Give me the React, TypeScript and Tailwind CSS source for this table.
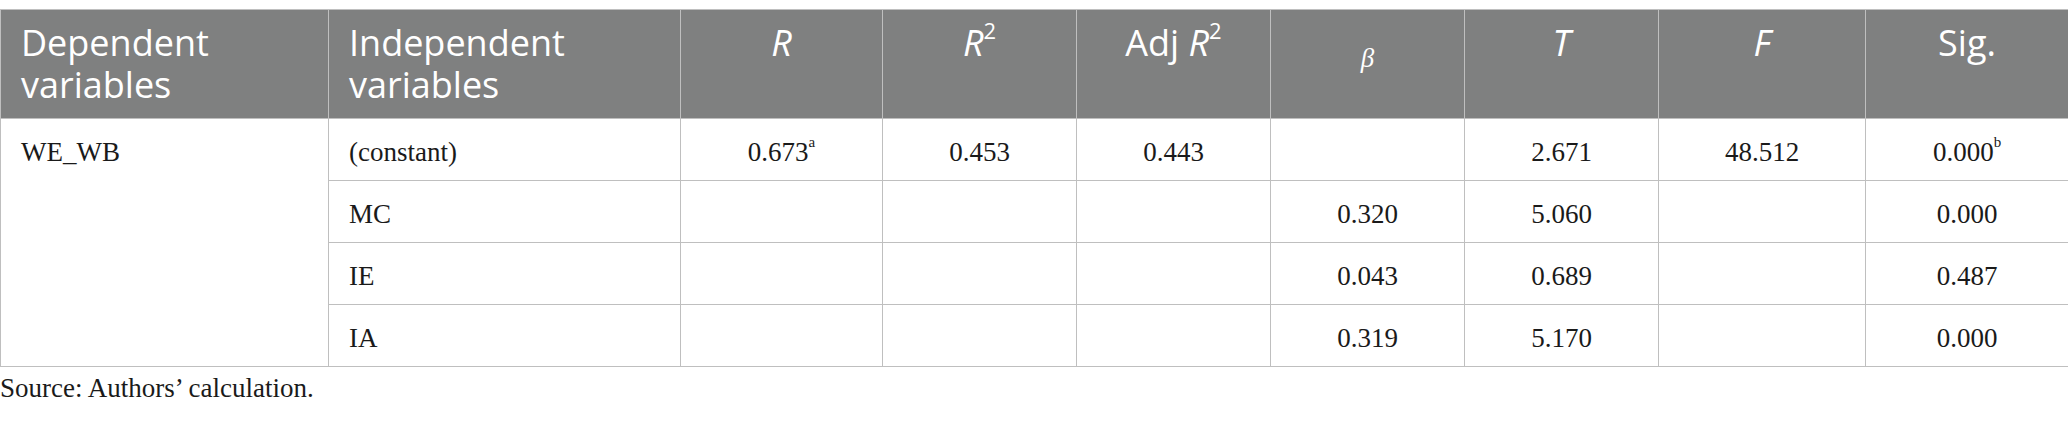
import React from "react";

const serif = "font-['Liberation_Serif','Times_New_Roman',serif]";
const sans = "font-['Open_Sans','Noto_Sans',sans-serif]";

const th =
  "border border-[#bfbfbf] bg-[#7f8080] text-white align-top pt-[12px] pb-[12px] text-[36px] leading-[42px] font-normal";
const td =
  "border border-[#bfbfbf] align-top pt-[18px] pb-[13px] text-[27px] leading-[30px] text-[#1a1a1a]";

type Row = {
  iv: string;
  r?: React.ReactNode;
  r2?: string;
  adj?: string;
  beta?: string;
  t?: string;
  f?: string;
  sig?: React.ReactNode;
};

const rows: Row[] = [
  {
    iv: "(constant)",
    r: (
      <>
        0.673<sup className="text-[15px] align-[7px] leading-none">a</sup>
      </>
    ),
    r2: "0.453",
    adj: "0.443",
    t: "2.671",
    f: "48.512",
    sig: (
      <>
        0.000<sup className="text-[15px] align-[7px] leading-none">b</sup>
      </>
    ),
  },
  { iv: "MC", beta: "0.320", t: "5.060", sig: "0.000" },
  { iv: "IE", beta: "0.043", t: "0.689", sig: "0.487" },
  { iv: "IA", beta: "0.319", t: "5.170", sig: "0.000" },
];

export default function App() {
  return (
    <div className="w-[2068px] h-[421px] bg-white pt-[9px] overflow-hidden">
      <table className={`w-[2068px] border-collapse table-fixed ${serif}`}>
        <colgroup>
          <col className="w-[328px]" />
          <col className="w-[352px]" />
          <col className="w-[202px]" />
          <col className="w-[194px]" />
          <col className="w-[194px]" />
          <col className="w-[194px]" />
          <col className="w-[194px]" />
          <col className="w-[207px]" />
          <col className="w-[203px]" />
        </colgroup>
        <thead>
          <tr className={sans}>
            <th className={`${th} text-left pl-[20px] pr-[10px]`}>
              Dependent
              <br />
              variables
            </th>
            <th className={`${th} text-left pl-[20px] pr-[10px]`}>
              Independent
              <br />
              variables
            </th>
            <th className={`${th} text-center`}>
              <i>R</i>
            </th>
            <th className={`${th} text-center`}>
              <i>R</i>
              <sup className="text-[22px] align-[6px] leading-none">2</sup>
            </th>
            <th className={`${th} text-center`}>
              Adj <i>R</i>
              <sup className="text-[22px] align-[6px] leading-none">2</sup>
            </th>
            <th className={`${th} text-center`}>
              <span className={`${serif} italic text-[27px] align-[-11px]`}>β</span>
            </th>
            <th className={`${th} text-center`}>
              <i>T</i>
            </th>
            <th className={`${th} text-center`}>
              <i>F</i>
            </th>
            <th className={`${th} text-center`}>Sig.</th>
          </tr>
        </thead>
        <tbody>
          {rows.map((row, i) => (
            <tr key={row.iv}>
              {i === 0 && (
                <td rowSpan={4} className={`${td} text-left pl-[20px]`}>
                  WE_WB
                </td>
              )}
              <td className={`${td} text-left pl-[20px]`}>{row.iv}</td>
              <td className={`${td} text-center`}>{row.r}</td>
              <td className={`${td} text-center`}>{row.r2}</td>
              <td className={`${td} text-center`}>{row.adj}</td>
              <td className={`${td} text-center`}>{row.beta}</td>
              <td className={`${td} text-center`}>{row.t}</td>
              <td className={`${td} text-center`}>{row.f}</td>
              <td className={`${td} text-center`}>{row.sig}</td>
            </tr>
          ))}
        </tbody>
      </table>
      <p className={`${serif} text-[27px] leading-[30px] text-[#1a1a1a] mt-[6px]`}>
        Source: Authors’ calculation.
      </p>
    </div>
  );
}
